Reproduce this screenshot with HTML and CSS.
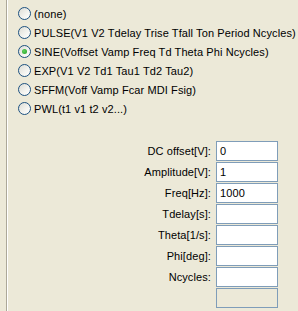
FILE: index.html
```html
<!DOCTYPE html>
<html lang="en">
<head>
    <meta charset="UTF-8">
    <title>Source</title>
    <link rel="stylesheet" href="styles.css">
</head>
<body>
    <div class="panel">
        <div class="radio-list">
            <label class="radio-row"><span class="radio"></span>(none)</label>
            <label class="radio-row"><span class="radio"></span>PULSE(V1 V2 Tdelay Trise Tfall Ton Period Ncycles)</label>
            <label class="radio-row"><span class="radio checked"></span>SINE(Voffset Vamp Freq Td Theta Phi Ncycles)</label>
            <label class="radio-row"><span class="radio"></span>EXP(V1 V2 Td1 Tau1 Td2 Tau2)</label>
            <label class="radio-row"><span class="radio"></span>SFFM(Voff Vamp Fcar MDI Fsig)</label>
            <label class="radio-row"><span class="radio"></span>PWL(t1 v1 t2 v2...)</label>
        </div>

        <div class="fields">
            <div class="field"><span class="field-label">DC offset[V]:</span><div class="box">0</div></div>
            <div class="field"><span class="field-label">Amplitude[V]:</span><div class="box">1</div></div>
            <div class="field"><span class="field-label">Freq[Hz]:</span><div class="box">1000</div></div>
            <div class="field"><span class="field-label">Tdelay[s]:</span><div class="box"></div></div>
            <div class="field"><span class="field-label">Theta[1/s]:</span><div class="box"></div></div>
            <div class="field"><span class="field-label">Phi[deg]:</span><div class="box"></div></div>
            <div class="field"><span class="field-label">Ncycles:</span><div class="box"></div></div>
            <div class="field"><span class="field-label"></span><div class="box disabled"></div></div>
        </div>
    </div>
</body>
</html>
```

FILE: styles.css
```css
* {
    margin: 0;
    padding: 0;
    box-sizing: border-box;
}
body {
    background-color: #ece9d8;
    font-family: "Liberation Sans", Arial, sans-serif;
    font-size: 11px;
    letter-spacing: 0.1px;
    color: #000;
}
.panel {
    margin-left: 6px;
    border-left: 1px solid #aca899;
    box-shadow: inset 1px 0 0 #fff;
    height: 311px;
    padding-top: 4px;
}
.radio-list {
    display: flex;
    flex-direction: column;
    padding-left: 11px;
}
.radio-row {
    display: flex;
    align-items: center;
    height: 19px;
    gap: 3px;
    white-space: nowrap;
}
.radio {
    width: 13px;
    height: 13px;
    border-radius: 50%;
    border: 1px solid #1c5180;
    background: linear-gradient(135deg, #dcdcd5 0%, #f4f4f0 60%, #fff 100%);
    display: flex;
    align-items: center;
    justify-content: center;
    flex-shrink: 0;
}
.radio.checked::after {
    content: "";
    width: 5px;
    height: 5px;
    border-radius: 50%;
    background: radial-gradient(circle at 40% 40%, #5fd05f, #21a121);
}
.fields {
    display: flex;
    flex-direction: column;
    gap: 1px;
    margin-top: 23px;
}
.field {
    display: flex;
    align-items: center;
    height: 20px;
}
.field-label {
    width: 209px;
    text-align: right;
    padding-right: 5px;
}
.box {
    width: 62px;
    height: 20px;
    border: 1px solid #7f9db9;
    background-color: #fff;
    padding: 2px 3px;
    line-height: 14px;
}
.box.disabled {
    background-color: #ece9d8;
}
```
